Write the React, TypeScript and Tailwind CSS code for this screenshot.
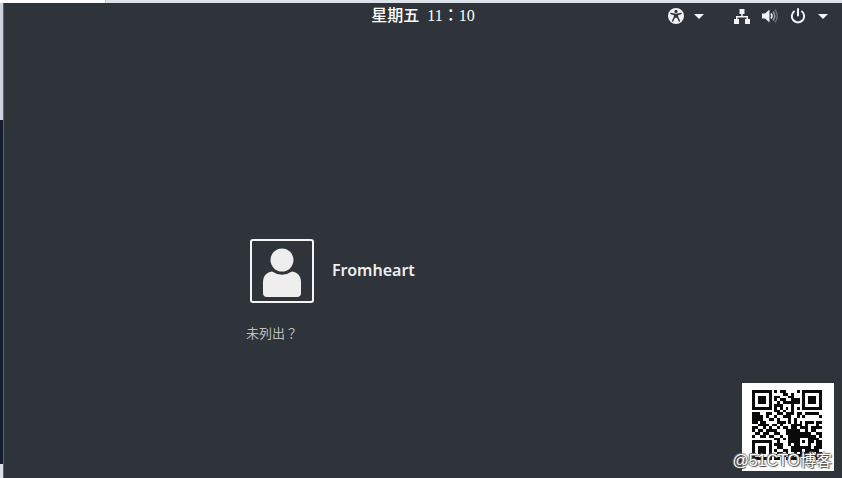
const QR_ROWS = [
  "1111111010110000101111111",
  "1000001000011010001000001",
  "1011101011000110001011101",
  "1011101010110011101011101",
  "1011101001011111101011101",
  "1000001011100010001000001",
  "1111111010101010101111111",
  "0000000011010010000000000",
  "1110011001101110110111110",
  "1111010010011100101000001",
  "1111001101000101000000000",
  "1101100001110101010111011",
  "0011110110100011110100010",
  "1100101001011011011101111",
  "1011011110001111100101100",
  "0110110011001111111110011",
  "1001101100100111111111101",
  "0000000011010111100011110",
  "1111111001000111101011011",
  "1000001011100101100010011",
  "1011101001100011111110111",
  "1011101010011011110111110",
  "1011101001101001011111011",
  "1000001010010110110101111",
  "1111111011001011001101011",
];

// one path for all cells, so neighbouring cells join without seams
const qrPath = QR_ROWS.map((row, y) =>
  row
    .split("")
    .map((cell, x) => (cell === "1" ? `M${x} ${y}h1v1h-1z` : ""))
    .join("")
).join("");

function QrCode() {
  return (
    <svg viewBox="0 0 25 25" className="size-[70px]" shapeRendering="crispEdges" role="img" aria-label="QR">
      <path d={qrPath} fill="#0a0a0a" />
    </svg>
  );
}

function Caret() {
  return (
    <svg viewBox="0 0 10 5" className="h-[5px] w-[10px]" fill="currentColor" aria-hidden="true">
      <path d="M0 0h10L5 5z" />
    </svg>
  );
}

function AccessibilityIcon() {
  return (
    <svg viewBox="0 0 16 16" className="size-4" aria-hidden="true">
      <circle cx="8" cy="8" r="8" fill="currentColor" />
      <circle cx="8" cy="3.4" r="1.6" fill="#2e3439" />
      <path
        d="M3 5.6l3.6.8v2.4L4.6 13M13 5.6l-3.6.8v2.4l2 4.2"
        fill="none"
        stroke="#2e3439"
        strokeWidth="1.5"
        strokeLinecap="round"
      />
      <path d="M6 5.8h4v4H6z" fill="#2e3439" />
    </svg>
  );
}

function NetworkIcon() {
  return (
    <svg viewBox="0 0 16 16" className="size-4" fill="currentColor" aria-hidden="true">
      <path d="M5.5 1h5v5H8.75v2H14v3h2v5h-5v-5h1.5V9.5h-9V11H5v5H0v-5h2V8h5.25V6H5.5z" />
    </svg>
  );
}

function VolumeIcon() {
  return (
    <svg viewBox="0 0 16 16" className="size-4" aria-hidden="true">
      <path d="M0 5.5h3l4.5-4v13l-4.5-4H0z" fill="currentColor" />
      <path d="M9 5.5q2 2.5 0 5" fill="none" stroke="currentColor" strokeWidth="1.6" />
      <path d="M11 3.5q3.5 4.5 0 9" fill="none" stroke="#9a9ea2" strokeWidth="1.5" />
      <path d="M13 1.5q4.5 6.5 0 13" fill="none" stroke="#6c7176" strokeWidth="1.4" />
    </svg>
  );
}

function PowerIcon() {
  return (
    <svg viewBox="0 0 16 16" className="size-4" fill="none" stroke="currentColor" strokeWidth="2" aria-hidden="true">
      <path d="M4.6 3a6.2 6.2 0 1 0 6.8 0" />
      <path d="M8 1v6.5" strokeLinecap="round" />
    </svg>
  );
}

function AvatarIcon() {
  return (
    <svg viewBox="0 0 60 60" className="size-[60px]" fill="#eeeeee" aria-hidden="true">
      <circle cx="30" cy="19" r="11.5" />
      <path d="M20 30.5q10 6.5 20 0C46 31 49 36 49 41v11q0 4-4 4H15q-4 0-4-4V41c0-5 3-10 9-10.5z" />
    </svg>
  );
}

function TopBar() {
  return (
    <header className="grid grid-cols-[1fr_auto_1fr] items-center text-[#f2f2f2]">
      <span />
      <time className="flex gap-2 font-['Liberation_Serif','Noto_Sans_CJK_TC',serif] text-base leading-[26px] font-medium text-white">
        <span>星期五</span>
        <span>11：10</span>
      </time>
      <div className="flex items-center justify-end gap-[30px] pr-3.5">
        <button type="button" aria-label="辅助功能" className="flex items-center gap-[10px]">
          <AccessibilityIcon />
          <Caret />
        </button>
        <button type="button" aria-label="系统" className="flex items-center gap-3">
          <NetworkIcon />
          <VolumeIcon />
          <PowerIcon />
          <Caret />
        </button>
      </div>
    </header>
  );
}

function UserList() {
  return (
    <main className="mx-auto mt-[210px] w-full max-w-[354px]">
      <button type="button" className="ml-1 flex items-center gap-[18px]">
        <span className="rounded-[3px] border-2 border-[#f4f4f4]">
          <AvatarIcon />
        </span>
        <span className="pb-0.5 font-['Noto_Sans','Open_Sans',sans-serif] text-base leading-6 font-semibold text-[#eeeeee]">
          Fromheart
        </span>
      </button>
      <button
        type="button"
        className="mt-5 block font-['Noto_Sans_CJK_TC',sans-serif] text-[13px] leading-5 text-[#bcbfbe]">
        未列出？
      </button>
    </main>
  );
}

function Watermark() {
  return (
    <aside className="absolute right-2 bottom-[7px]">
      <div className="flex h-[88px] w-[92px] bg-white pt-[7px] pl-[10px]">
        <QrCode />
      </div>
      <p className="absolute right-0 bottom-0 pr-0.5 font-['Liberation_Sans','Noto_Sans_CJK_SC',sans-serif] text-base leading-5 whitespace-nowrap text-white [text-shadow:1px_1px_1px_#444,-1px_0_1px_#666,0_-1px_1px_#777]">
        @51CTO博客
      </p>
    </aside>
  );
}

export default function App() {
  return (
    <div className="relative flex min-h-screen flex-col overflow-hidden bg-[#2e3439]">
      <div className="flex h-[3px] bg-[#dce2e8]">
        <div className="w-[106px] border-r border-[#b9c1cc] bg-[#fcfcff]" />
      </div>
      <div className="flex flex-1">
        <div className="flex w-1 flex-col border-r border-[#59616c]">
          <div className="h-[117px] bg-[#ccd3dc]" />
          <div className="flex-1 bg-[#151c2b]" />
          <div className="h-[14px] bg-[#d9e0e8]" />
        </div>
        <div className="flex-1">
          <TopBar />
          <UserList />
        </div>
      </div>
      <Watermark />
    </div>
  );
}
